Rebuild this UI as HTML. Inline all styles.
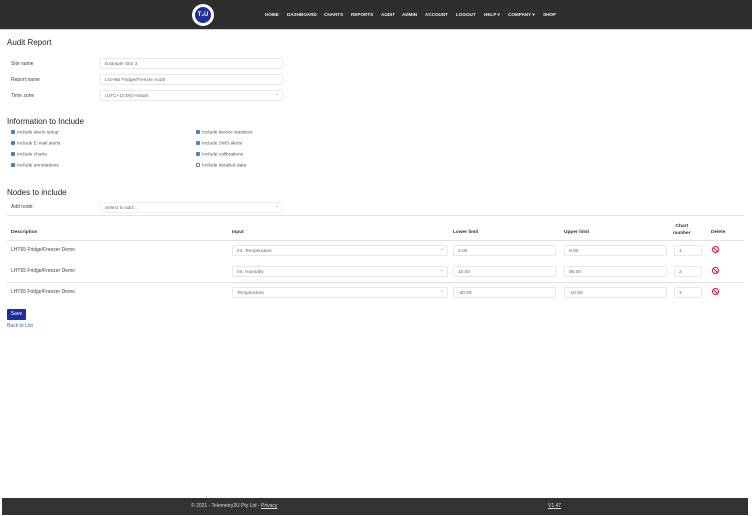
<!DOCTYPE html>
<html><head><style>
*{margin:0;padding:0;box-sizing:border-box}
body{width:752px;height:516px;background:#fff;font-family:"Liberation Sans",sans-serif;color:#444;position:relative;overflow:hidden;font-size:5px}
.a{position:absolute;white-space:nowrap}
.nav{left:0;top:0;width:752px;height:30px;background:#2e2e2e;border-bottom:1px solid #cfcfcf}
.nav span{color:#eee;font-size:4.6px;font-weight:bold;position:absolute;top:12px}
.h{font-size:8px;color:#222}
.in{border:1px solid #e8e8e8;border-radius:2px;height:11px;font-size:4.8px;color:#666;padding:2.5px 4px}
.sel::after{content:"⌄";position:absolute;right:3px;top:0px;font-size:5px;color:#888}
.cb{font-size:4.8px;color:#555}
.cb i{display:inline-block;width:4px;height:4px;background:#4a80c8;border-radius:1px;margin-right:2px;vertical-align:-0.5px}
.cb i.o{background:#fff;border:0.6px solid #777}
.th{font-size:4.8px;font-weight:bold;color:#333}
.line{height:1px;background:#e2e2e2;left:7px;width:737px}
.del{width:7px;height:7px;border:1.6px solid #d0103a;border-radius:50%}
.del::after{content:"";position:absolute;left:-0.3px;top:1.8px;width:4.5px;height:1.3px;background:#d0103a;transform:rotate(45deg)}
</style></head><body>
<div class="a nav">
<div class="a" style="left:192px;top:4px;width:22px;height:22px;border-radius:50%;background:#fff"></div>
<div class="a" style="left:195px;top:7px;width:16px;height:16px;border-radius:50%;background:#1c2f9c;color:#fff;font-size:6px;font-weight:bold;text-align:center;line-height:16px">T₂U</div>
<span style="left:265px">HOME</span><span style="left:287px">DASHBOARD</span><span style="left:324px">CHARTS</span><span style="left:351px">REPORTS</span><span style="left:381px">AUDIT</span><span style="left:402px">ADMIN</span><span style="left:425px">ACCOUNT</span><span style="left:456px">LOGOUT</span><span style="left:484px">HELP ▾</span><span style="left:508px">COMPANY ▾</span><span style="left:543px">SHOP</span>
</div>
<div class="a h" style="left:7px;top:38px">Audit Report</div>
<div class="a" style="left:11px;top:61px">Site name</div>
<div class="a in" style="left:100px;top:58px;width:183px">Example Site 3</div>
<div class="a" style="left:11px;top:77px">Report name</div>
<div class="a in" style="left:100px;top:74px;width:183px">LGH65 Fridge/Freezer Audit</div>
<div class="a" style="left:11px;top:93px">Time zone</div>
<div class="a in sel" style="left:100px;top:90px;width:183px">(UTC+10:00) Hobart</div>
<div class="a h" style="left:7px;top:117px">Information to Include</div>
<div class="a cb" style="left:11px;top:130px"><i></i>Include alerts setup</div>
<div class="a cb" style="left:11px;top:141px"><i></i>Include E-mail alerts</div>
<div class="a cb" style="left:11px;top:152px"><i></i>Include charts</div>
<div class="a cb" style="left:11px;top:163px"><i></i>Include annotations</div>
<div class="a cb" style="left:196px;top:130px"><i></i>Include device statistics</div>
<div class="a cb" style="left:196px;top:141px"><i></i>Include SMS alerts</div>
<div class="a cb" style="left:196px;top:152px"><i></i>Include calibrations</div>
<div class="a cb" style="left:196px;top:163px"><i class="o"></i>Include detailed data</div>
<div class="a h" style="left:7px;top:188px">Nodes to include</div>
<div class="a" style="left:11px;top:204px">Add node:</div>
<div class="a in sel" style="left:100px;top:202px;width:183px;border-color:#f0f0f0">Select to add...</div>
<div class="a line" style="top:215px"></div>
<div class="a th" style="left:11px;top:230px">Description</div>
<div class="a th" style="left:232px;top:230px">Input</div>
<div class="a th" style="left:453px;top:230px">Lower limit</div>
<div class="a th" style="left:564px;top:230px">Upper limit</div>
<div class="a th" style="left:673px;top:223px;text-align:center;line-height:7px">Chart<br>number</div>
<div class="a th" style="left:711px;top:230px">Delete</div>
<div class="a line" style="top:240px"></div>
<div class="a" style="left:11px;top:247px">LHT65 Fridge/Freezer Demo</div>
<div class="a in sel" style="left:232px;top:245px;width:216px">Int. Temperature</div>
<div class="a in" style="left:453px;top:245px;width:103px">2.00</div>
<div class="a in" style="left:564px;top:245px;width:103px">8.00</div>
<div class="a in" style="left:674px;top:245px;width:28px">1</div>
<div class="a del" style="left:712px;top:246px"></div>
<div class="a" style="left:11px;top:268px">LHT65 Fridge/Freezer Demo</div>
<div class="a in sel" style="left:232px;top:266px;width:216px">Int. Humidity</div>
<div class="a in" style="left:453px;top:266px;width:103px">10.00</div>
<div class="a in" style="left:564px;top:266px;width:103px">90.00</div>
<div class="a in" style="left:674px;top:266px;width:28px">2</div>
<div class="a del" style="left:712px;top:267px"></div>
<div class="a line" style="top:282px"></div>
<div class="a" style="left:11px;top:289px">LHT65 Fridge/Freezer Demo</div>
<div class="a in sel" style="left:232px;top:287px;width:216px">Temperature</div>
<div class="a in" style="left:453px;top:287px;width:103px">-30.00</div>
<div class="a in" style="left:564px;top:287px;width:103px">-10.00</div>
<div class="a in" style="left:674px;top:287px;width:28px">3</div>
<div class="a del" style="left:712px;top:288px"></div>
<div class="a" style="left:7px;top:309px;width:19px;height:11px;background:#1a2f9a;color:#fff;border-radius:1px;text-align:center;line-height:11px">Save</div>
<div class="a" style="left:7px;top:323px;color:#3465b0">Back to List</div>
<div class="a" style="left:2px;top:498px;width:746px;height:17px;background:#323232"></div>
<div class="a" style="left:191px;top:503px;color:#ddd">© 2021 - Telemetry2U Pty Ltd - <u>Privacy</u></div>
<div class="a" style="left:548px;top:503px;color:#ddd"><u>V1.47</u></div>
</body></html>
